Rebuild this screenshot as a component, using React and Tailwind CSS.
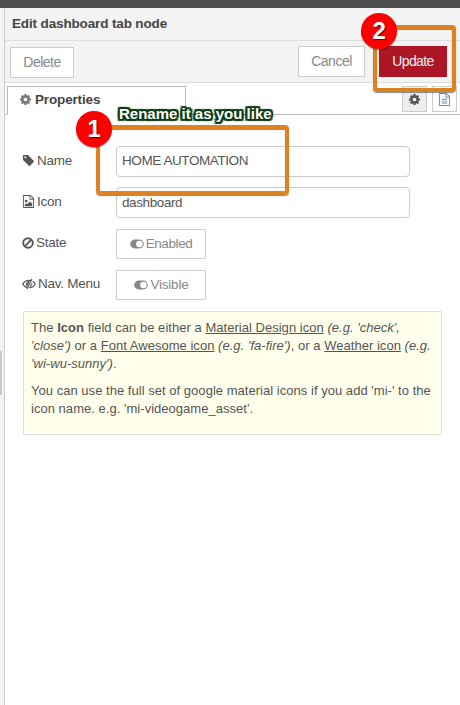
import React from "react";

const COG =
  "M1152 896q0-106-75-181t-181-75-181 75-75 181 75 181 181 75 181-75 75-181zm512-109v222q0 12-8 23t-20 13l-185 28q-19 54-39 91 35 50 107 138 10 12 10 25t-9 23q-27 37-99 108t-94 71q-12 0-26-9l-138-108q-44 23-91 38-16 136-29 186-7 28-36 28h-222q-14 0-24.500-8.500t-11.500-21.500l-28-184q-49-16-90-37l-141 107q-10 9-25 9-14 0-25-11-126-114-165-168-7-10-7-23 0-12 8-23 15-21 51-66.500t54-70.500q-27-50-41-99l-183-27q-13-2-21-12.500t-8-23.500v-222q0-12 8-23t19-13l186-28q14-46 39-92-40-57-107-138-10-12-10-24 0-10 9-23 26-36 98.500-107.500t94.500-71.500q13 0 26 10l138 107q44-23 91-38 16-136 29-186 7-28 36-28h222q14 0 24.500 8.500t11.500 21.500l28 184q49 16 90 37l142-107q9-9 24-9 13 0 25 10 129 119 165 170 7 8 7 22 0 12-8 23-15 21-51 66.500t-54 70.500q26 50 41 98l183 28q13 2 21 12.500t8 23.500z";
const TAG =
  "M576 448q0-53-37.500-90.500t-90.500-37.500-90.500 37.500-37.500 90.500 37.500 90.500 90.500 37.500 90.500-37.500 37.500-90.500zm1067 576q0 53-37 90l-491 492q-39 37-91 37-53 0-90-37l-715-716q-38-37-64.500-101t-26.500-117v-416q0-52 38-90t90-38h416q53 0 117 26.500t102 64.500l715 714q37 39 37 91z";
const FILE =
  "M1596 380q28 28 48 76t20 88v1152q0 40-28 68t-68 28h-1344q-40 0-68-28t-28-68v-1600q0-40 28-68t68-28h896q40 0 88 20t76 48zm-444-244v376h376q-10-29-22-41l-313-313q-12-12-41-22zm384 1528v-1024h-416q-40 0-68-28t-28-68v-416h-768v1536h1280z";

function Glyph({ d, className }) {
  return (
    <svg viewBox="0 0 1792 1792" className={className} fill="currentColor">
      <path d={d} />
    </svg>
  );
}

function ToggleIcon() {
  return (
    <svg viewBox="0 0 14 10" className="h-[10px] w-[14px] shrink-0">
      <rect x="0.2" y="0.6" width="13.600" height="8.800" rx="4.400" fill="#888" />
      <circle cx="9.400" cy="5" r="3.300" fill="#fff" />
    </svg>
  );
}

function BanIcon() {
  return (
    <svg viewBox="0 0 12 12" className="h-3 w-3 shrink-0" fill="none" stroke="currentColor" strokeWidth="1.900">
      <circle cx="6" cy="6" r="4.800" />
      <path d="M9.400 2.600 2.600 9.400" />
    </svg>
  );
}

function EyeSlashIcon() {
  return (
    <svg viewBox="0 0 14 12" className="h-3 w-[14px] shrink-0" fill="none" stroke="currentColor">
      <path d="M5 9.500C3.200 9 1.700 7.700.7 6c1.400-2.300 3.600-3.700 6.300-3.700.7 0 1.300.1 1.900.3M10.600 3.300c1.100.6 2 1.500 2.700 2.700-1.400 2.300-3.500 3.600-6 3.700" strokeWidth="1.300" />
      <path d="M4.800 7.900A3 3 0 0 1 7 3.400z" fill="currentColor" strokeWidth="1" />
      <path d="M10 5.200A3 3 0 0 1 8 8.500z" fill="currentColor" strokeWidth=".6" />
      <path d="M9.900 1 5 11" strokeWidth="1.300" />
    </svg>
  );
}

function Label({ icon, children }) {
  return (
    <div className="flex h-[29px] w-[94px] shrink-0 items-center gap-[2px]">
      {icon}
      <span className="whitespace-nowrap">{children}</span>
    </div>
  );
}

function StepBadge({ n, className }) {
  return (
    <div
      className={
        "absolute flex h-9 w-9 items-center justify-center rounded-full bg-[#fe0000] text-[24px] leading-none font-bold text-white shadow-[0_1px_1px_rgba(0,0,0,0.4)] [text-shadow:1px_1px_1px_#600] " +
        className
      }
    >
      {n}
    </div>
  );
}

export default function App() {
  return (
    <div className="relative flex h-[705px] w-[460px] flex-col overflow-hidden bg-white font-['Liberation_Sans',Arial,sans-serif] text-[13.500px] leading-[18px] tracking-[-0.25px] text-[#555]">
      <div className="h-2 shrink-0 bg-[#4f4f4f]" />
      <div className="flex min-h-0 flex-1">
        <div className="flex w-[5px] shrink-0 flex-col border-r border-[#ccc] bg-[#f3f3f3] pt-[343px]">
          <div className="h-11 w-[2px] bg-[#c8c8c8]" />
        </div>

        <div className="flex flex-1 flex-col">
          <header className="flex h-[33px] items-center border-b border-[#ddd] bg-[#f3f3f3] pb-px pl-[7px] font-bold tracking-[-0.14px] text-[#444]">
            <span className="whitespace-nowrap">Edit dashboard tab node</span>
          </header>

          <div className="flex h-[42px] items-start border-b border-[#ddd] bg-[#f3f3f3] pl-[5px] text-[14px] text-[#888]">
            <button className="mt-[6px] h-[31px] w-16 border border-[#ccc] bg-white pb-px tracking-[-0.5px]">Delete</button>
            <button className="mt-[5px] ml-[224px] h-[31px] w-[67px] border border-[#ccc] bg-white pb-px tracking-[-0.5px]">Cancel</button>
            <button className="mt-[5px] ml-[14px] h-[31px] w-[68px] bg-[#ad1625] pb-px tracking-[-0.6px] text-[#eee]">Update</button>
          </div>

          <div className="flex h-8 shrink-0 pt-[3px]">
            <div className="w-[2px] border-b border-[#bbb]" />
            <div className="flex w-[179px] items-center gap-[3px] border border-b-0 border-[#bbb] pb-[3px] pl-[11px] font-bold tracking-[-0.15px] text-[#444]">
              <Glyph d={COG} className="h-[13px] w-[13px] text-[#777]" />
              <span>Properties</span>
            </div>
            <div className="flex flex-1 justify-end gap-[5px] border-b border-[#bbb] pr-[3px]">
              <div className="flex h-[26px] w-[25px] items-center justify-center border border-[#ccc] bg-[#eee]">
                <Glyph d={COG} className="h-[13px] w-[13px] text-[#555]" />
              </div>
              <div className="flex h-[26px] w-[25px] items-center justify-center border border-[#ccc] bg-white">
                <Glyph
                  d={FILE + "M512 800h768v128h-768zM512 1056h768v128h-768zM512 1312h768v128h-768z"}
                  className="h-[13px] w-[13px] text-[#6f87ad]"
                />
              </div>
            </div>
          </div>

          <main className="flex flex-col pt-[31px] pl-[17px]">
            <div className="flex h-[41px] items-start">
              <Label icon={<Glyph d={TAG} className="h-[13px] w-[13px] shrink-0" />}>Name</Label>
              <div className="flex h-[31px] w-[294px] items-center rounded-[4px] border border-[#ccc] pb-[2px] pl-[5px] tracking-[-0.42px]">
                HOME AUTOMATION
              </div>
            </div>
            <div className="flex h-[42px] items-start">
              <Label
                icon={
                  <Glyph
                    d={FILE + "M1408 1216v320h-1024v-192l192-192 128 128 384-384zM576 1024q-80 0-136-56t-56-136 56-136 136-56 136 56 56 136-56 136-136 56z"}
                    className="h-[13px] w-[13px] shrink-0"
                  />
                }
              >
                Icon
              </Label>
              <div className="flex h-[31px] w-[294px] items-center rounded-[4px] border border-[#ccc] pl-[5px] tracking-[-0.4px]">
                dashboard
              </div>
            </div>
            <div className="flex h-[41px] items-start">
              <div className="-mt-px"><Label icon={<BanIcon />}>State</Label></div>
              <button className="flex h-[30px] w-[90px] items-center justify-center gap-[2px] rounded-[1px] border border-[#ccc] tracking-[-0.4px] text-[#888]">
                <ToggleIcon />
                Enabled
              </button>
            </div>
            <div className="flex h-[42px] items-start">
              <div className="-mt-px"><Label icon={<EyeSlashIcon />}>Nav. Menu</Label></div>
              <button className="flex h-[30px] w-[90px] items-center justify-center gap-[3px] rounded-[1px] border border-[#ccc] text-[#888]">
                <ToggleIcon />
                Visible
              </button>
            </div>

            <section className="-mt-px ml-[1px] flex h-[124px] w-[419px] flex-col gap-[9px] rounded-[1px] border border-[#ddd] bg-[#ffffec] pt-[7px] pl-[7px] text-[13px] tracking-[0.030px] whitespace-nowrap">
              <div>
                <p>
                  The <b>Icon</b> field can be either a <u>Material Design icon</u> <i>(e.g. 'check',</i>
                </p>
                <p>
                  <i>'close')</i> or a <u>Font Awesome icon</u> <i>(e.g. 'fa-fire')</i>, or a <u>Weather icon</u> <i>(e.g.</i>
                </p>
                <p><i>'wi-wu-sunny')</i>.</p>
              </div>
              <div>
                <p>You can use the full set of google material icons if you add 'mi-' to the</p>
                <p>icon name. e.g. 'mi-videogame_asset'.</p>
              </div>
            </section>
          </main>
        </div>
      </div>

      <div className="absolute top-[125px] left-[96px] h-[70px] w-[193px] rounded-[4px] border-4 border-[#dc8220] shadow-[0_1px_1px_rgba(60,60,60,0.6),inset_0_1px_1px_rgba(60,60,60,0.6)]" />
      <div className="absolute top-[25px] left-[373px] h-[67px] w-[83px] rounded-[4px] border-4 border-[#dc8220] shadow-[0_1px_1px_rgba(60,60,60,0.6),inset_0_1px_1px_rgba(60,60,60,0.6)]" />
      <StepBadge n="1" className="top-[111px] left-[76px]" />
      <StepBadge n="2" className="top-[13px] left-[361px]" />
      <div className="absolute top-[105px] left-[119px] text-[15px] leading-[18px] font-bold tracking-normal whitespace-nowrap text-white [text-shadow:2px_0_0_#0c3c14,-2px_0_0_#0c3c14,0_2px_0_#0c3c14,0_-2px_0_#0c3c14,2px_2px_1px_#0c3c14,-2px_2px_1px_#0c3c14,2px_-2px_1px_#0c3c14,-2px_-2px_1px_#0c3c14,1px_1px_0_#0c3c14,-1px_-1px_0_#0c3c14,1px_-1px_0_#0c3c14,-1px_1px_0_#0c3c14]">
        Rename it as you like
      </div>
    </div>
  );
}
